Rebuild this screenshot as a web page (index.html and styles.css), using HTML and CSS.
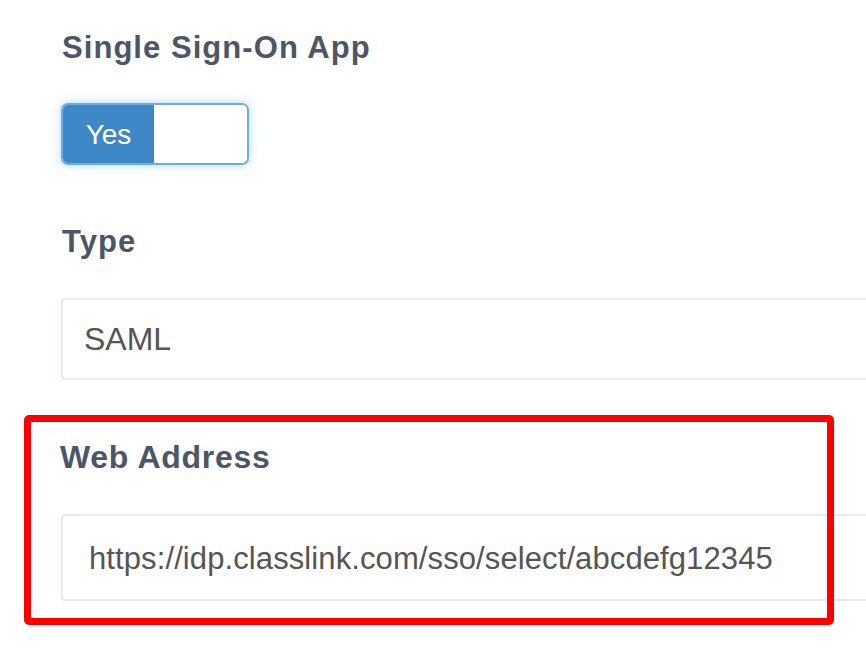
FILE: index.html
```html
<!DOCTYPE html>
<html>
<head>
<meta charset="utf-8">
<link rel="stylesheet" href="styles.css">
</head>
<body>
<div class="form">
  <div class="field">
    <div class="label">Single Sign-On App</div>
    <div class="toggle">
      <span class="toggle-on">Yes</span>
      <span class="toggle-off"></span>
    </div>
  </div>
  <div class="field">
    <div class="label">Type</div>
    <div class="input input-type">SAML</div>
  </div>
  <div class="field">
    <div class="label label-web">Web Address</div>
    <div class="input input-url">https://idp.classlink.com/sso/select/abcdefg12345</div>
  </div>
  <div class="highlight"></div>
</div>
</body>
</html>
```

FILE: styles.css
```css
html, body {
  margin: 0;
  padding: 0;
  background: #ffffff;
  overflow: hidden;
}

body {
  width: 866px;
  height: 658px;
  font-family: "Liberation Sans", Arial, sans-serif;
}

.form {
  position: relative;
  padding: 30px 0 0 61px;
  display: flex;
  flex-direction: column;
  gap: 59px;
}

.field {
  display: flex;
  flex-direction: column;
}

.label {
  font-size: 31px;
  font-weight: bold;
  line-height: 36px;
  letter-spacing: 1.05px;
  color: #4b5666;
  margin-left: 1px;
}

.label-web {
  margin-left: -1px;
  font-size: 32px;
  letter-spacing: 0.7px;
}

.toggle {
  margin-top: 37px;
  width: 188px;
  height: 62px;
  box-sizing: border-box;
  border: 2px solid #6aaee6;
  border-radius: 7px;
  box-shadow: 0 0 8px rgba(102, 175, 233, 0.55);
  display: flex;
  overflow: hidden;
  background: #ffffff;
}

.toggle-on {
  width: 91px;
  background: #3f88c8;
  color: #ffffff;
  font-size: 28px;
  display: flex;
  align-items: center;
  justify-content: center;
  padding-top: 1px;
  box-sizing: border-box;
}

.toggle-off {
  flex: 1;
  background: #ffffff;
}

.input {
  width: 805px;
  box-sizing: border-box;
  border: 2px solid #e6eaef;
  border-right: none;
  border-radius: 4px 0 0 4px;
  color: #555555;
  font-size: 31px;
  display: flex;
  align-items: center;
  white-space: nowrap;
}

.input-type {
  margin-top: 38px;
  height: 82px;
  padding-left: 21px;
  font-size: 32px;
}

.input-url {
  margin-top: 39px;
  height: 87px;
  padding-left: 26px;
  padding-top: 2px;
  letter-spacing: 0.1px;
}

.highlight {
  position: absolute;
  left: 24px;
  top: 415px;
  width: 810px;
  height: 210px;
  box-sizing: border-box;
  border: 7px solid #ff0000;
  border-radius: 5px;
}
```
